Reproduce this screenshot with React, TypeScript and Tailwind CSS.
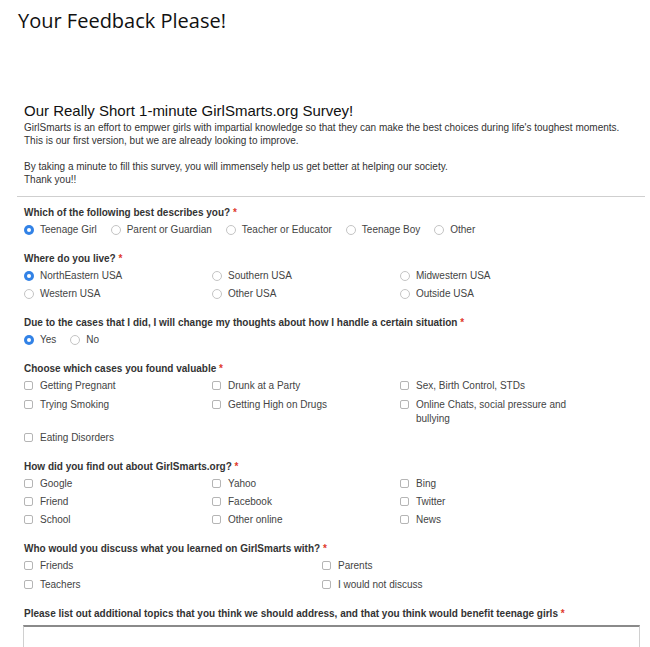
import React from "react";

type Q = {
  label: string;
  kind: "radio" | "check";
  layout: "inline" | "cols3" | "cols2";
  options: string[];
  selected?: string;
  roomy?: boolean;
};

const questions: Q[] = [
  {
    label: "Which of the following best describes you?",
    kind: "radio",
    layout: "inline",
    options: ["Teenage Girl", "Parent or Guardian", "Teacher or Educator", "Teenage Boy", "Other"],
    selected: "Teenage Girl",
  },
  {
    label: "Where do you live?",
    kind: "radio",
    layout: "cols3",
    options: ["NorthEastern USA", "Southern USA", "Midwestern USA", "Western USA", "Other USA", "Outside USA"],
    selected: "NorthEastern USA",
  },
  {
    label: "Due to the cases that I did, I will change my thoughts about how I handle a certain situation",
    kind: "radio",
    layout: "inline",
    options: ["Yes", "No"],
    selected: "Yes",
  },
  {
    label: "Choose which cases you found valuable",
    kind: "check",
    layout: "cols3",
    roomy: true,
    options: [
      "Getting Pregnant",
      "Drunk at a Party",
      "Sex, Birth Control, STDs",
      "Trying Smoking",
      "Getting High on Drugs",
      "Online Chats, social pressure and bullying",
      "Eating Disorders",
    ],
  },
  {
    label: "How did you find out about GirlSmarts.org?",
    kind: "check",
    layout: "cols3",
    options: ["Google", "Yahoo", "Bing", "Friend", "Facebook", "Twitter", "School", "Other online", "News"],
  },
  {
    label: "Who would you discuss what you learned on GirlSmarts with?",
    kind: "check",
    layout: "cols2",
    options: ["Friends", "Parents", "Teachers", "I would not discuss"],
  },
];

function Mark({ kind, on }: { kind: "radio" | "check"; on: boolean }) {
  if (kind === "check") {
    return <span className="mt-[2px] block h-[9px] w-[9px] shrink-0 rounded-[2px] border border-[#b5b5b5] bg-white" />;
  }
  if (on) {
    return (
      <span className="mt-[2px] flex h-[10px] w-[10px] shrink-0 items-center justify-center rounded-full bg-[#3282e6]">
        <span className="block h-[4px] w-[4px] rounded-full bg-white" />
      </span>
    );
  }
  return <span className="mt-[2px] block h-[10px] w-[10px] shrink-0 rounded-full border border-[#c4c4c4] bg-white" />;
}

function Option({ q, text }: { q: Q; text: string }) {
  return (
    <div className={q.kind === "check" ? "flex items-start gap-[7px] leading-[14px]" : "flex items-start gap-[6px] leading-[14px]"}>
      <Mark kind={q.kind} on={q.selected === text} />
      <span>{text}</span>
    </div>
  );
}

function Question({ q }: { q: Q }) {
  let box = "flex gap-x-[14px]";
  if (q.layout === "cols3") {
    box = q.roomy
      ? "grid grid-cols-[188px_188px_172px] gap-y-[5px]"
      : "grid grid-cols-[188px_188px_172px] gap-y-[4px]";
  } else if (q.layout === "cols2") {
    box = "grid grid-cols-[298px_298px] gap-y-[5px]";
  }
  return (
    <div className="mb-[15px]">
      <div className="mb-[3px] font-bold leading-[14px] text-[#333]">
        {q.label} <span className="text-[#e0392b]">*</span>
      </div>
      <div className={box}>
        {q.options.map((o) => (
          <Option key={o} q={q} text={o} />
        ))}
      </div>
    </div>
  );
}

export default function App() {
  return (
    <div className="min-h-[647px] overflow-hidden bg-white">
      <h1 className="pl-[18px] pt-[6px] font-['Open_Sans',sans-serif] text-[20px] leading-[30px] text-[#111]">
        Your Feedback Please!
      </h1>

      <div className="mt-[64px] font-['Liberation_Sans',Arial,sans-serif] text-[10px] text-[#444]">
        <div className="pl-[24px]">
          <h2 className="text-[15px] leading-[21px] text-[#111]">Our Really Short 1-minute GirlSmarts.org Survey!</h2>
          <p className="leading-[13px] text-[#333]">
            GirlSmarts is an effort to empwer girls with impartial knowledge so that they can make the best choices during life's toughest moments.
            <br />
            This is our first version, but we are already looking to improve.
            <br />
            <br />
            By taking a minute to fill this survey, you will immensely help us get better at helping our society.
            <br />
            Thank you!!
          </p>
        </div>

        <div className="ml-[17px] mr-[5px] mt-[10px] border-t border-[#cfcfcf]" />

        <div className="pl-[24px] pt-[9px]">
          {questions.map((q) => (
            <Question key={q.label} q={q} />
          ))}

          <div className="font-bold leading-[14px] text-[#333]">
            Please list out additional topics that you think we should address, and that you think would benefit teenage girls{" "}
            <span className="text-[#e0392b]">*</span>
          </div>
          <div className="ml-[-1px] mt-[4px] h-[60px] w-[617px] border-l border-r border-t-2 border-[#d0d0d0] border-t-[#8a8a8a]" />
        </div>
      </div>
    </div>
  );
}
